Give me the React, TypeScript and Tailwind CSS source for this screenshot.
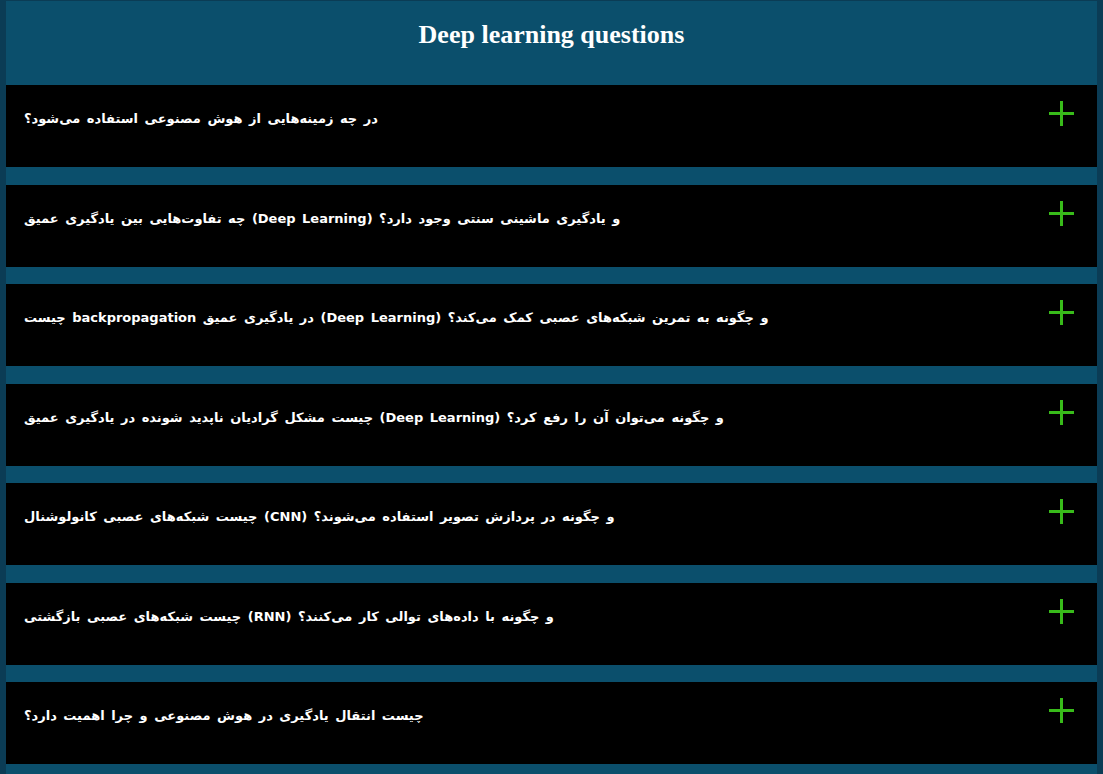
import React from 'react';

const questions: string[] = [
  'در چه زمینه‌هایی از هوش مصنوعی استفاده می‌شود؟',
  'و یادگیری ماشینی سنتی وجود دارد؟ (Deep Learning) چه تفاوت‌هایی بین یادگیری عمیق',
  'و چگونه به تمرین شبکه‌های عصبی کمک می‌کند؟ (Deep Learning) در یادگیری عمیق backpropagation چیست',
  'و چگونه می‌توان آن را رفع کرد؟ (Deep Learning) چیست مشکل گرادیان ناپدید شونده در یادگیری عمیق',
  'و چگونه در پردازش تصویر استفاده می‌شوند؟ (CNN) چیست شبکه‌های عصبی کانولوشنال',
  'و چگونه با داده‌های توالی کار می‌کنند؟ (RNN) چیست شبکه‌های عصبی بازگشتی',
  'چیست انتقال یادگیری در هوش مصنوعی و چرا اهمیت دارد؟',
];

const PlusIcon = () => (
  <svg width="25" height="25" viewBox="0 0 25 25" className="shrink-0">
    <line x1="12.5" y1="0" x2="12.5" y2="25" stroke="#38bb1a" strokeWidth="3" />
    <line x1="0" y1="12.5" x2="25" y2="12.5" stroke="#38bb1a" strokeWidth="3" />
  </svg>
);

export default function App() {
  return (
    <div className="min-h-screen bg-[#0b4f6c] border-l-[6px] border-r-[6px] border-t border-[#0b3c55]">
      <header className="h-[84px] pt-[19px]">
        <h1
          className="text-center text-white font-bold text-[26px] leading-[30px]"
          style={{ fontFamily: '"Liberation Serif", serif' }}
        >
          Deep learning questions
        </h1>
      </header>

      {/* question rows */}
      <div className="flex flex-col gap-[17.5px]">
        {questions.map((q, i) => (
          <div key={i} className="h-[82px] bg-black flex items-start justify-between pl-[18px] pr-[23px]">
            <p
              dir="rtl"
              className="pt-[24px] text-white font-bold text-[13px] leading-[20px] [word-spacing:2px]"
              style={{ fontFamily: '"DejaVu Sans", sans-serif' }}
            >
              {q}
            </p>
            <div className="pt-[16px]">
              <PlusIcon />
            </div>
          </div>
        ))}
      </div>
    </div>
  );
}
